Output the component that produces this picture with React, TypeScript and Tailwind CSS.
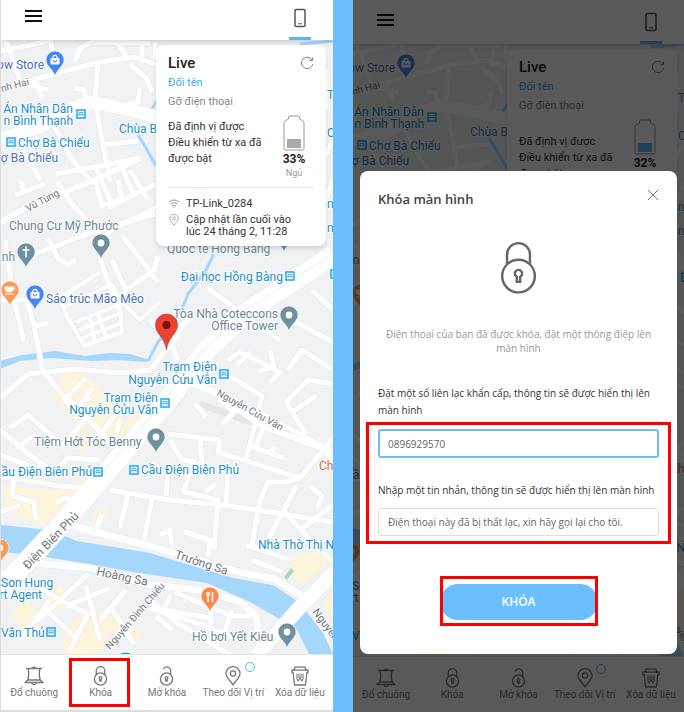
import type { ReactNode } from "react";

type RoadProps = { d: string; w: number };

const ROADS: RoadProps[] = [
  // north-west quarter
  { w: 5, d: "M0 51 L40 43 L52 40 M75 61 L80 48 L92 42 L150 43 M142 42 V63 M155 42 V60 M118 43 L128 60" },
  { w: 5, d: "M5 38 L20 80 M50 38 L56 70 M30 81 L62 72 L100 62 L135 57 L160 66 M20 82 L48 90 M36 80 L42 98 M75 88 L84 90 L86 100" },
  { w: 5, d: "M98 62 L95 100 L103 145 L110 182 M130 64 L146 78 L152 92 M140 88 L138 102 L128 104" },
  { w: 5, d: "M52 122 L72 160 L92 182 M102 145 L138 141 M56 174 L100 166 L140 158 M24 150 L40 180 M96 168 L112 204 M120 163 L134 196" },
  { w: 13, d: "M0 139 L40 127 L70 109 L92 102 L125 109 L170 120 L230 132" },
  // west
  { w: 6, d: "M0 223 L30 205 L75 188 L100 178 L140 158" },
  { w: 5, d: "M57 182 L72 204 L88 222 L86 234 M15 195 L45 184 M20 181 L25 192 M95 180 L102 206 L122 198 M118 180 L122 198 M108 208 L155 184 M130 170 L148 200" },
  { w: 5, d: "M30 256 L90 233 L155 214 M100 240 L118 226 L160 206 M48 238 L58 258 L68 265 L76 260 M122 236 L140 258 L158 282 M112 260 L120 278 L126 290 L154 270 L158 256 M100 258 L114 300" },
  { w: 4, d: "M60 298 L100 272 M66 306 L112 284 M60 298 L66 314 L84 346 L122 332 L120 302 L112 284 M76 322 L120 304 M79 330 L121 313 M82 338 L122 323 M90 318 L95 342 M98 314 L106 338 M124 304 L140 320 L160 302 M126 290 L118 310" },
  { w: 5, d: "M5 240 L14 300 L24 342 M0 300 H28 M26 298 L34 325 L42 368 L56 388 L78 408 L104 436 L118 448 M36 326 L48 323" },
  { w: 5, d: "M0 398 L28 374 L75 369 L120 373 L150 370 L166 350 L180 334" },
  // south-west
  { w: 5, d: "M10 428 L28 415 L62 445 M16 448 L36 434 M0 430 L30 455 L54 472 M54 472 L68 458 L100 460 M62 448 L84 420 L62 398 M66 398 L86 378 M78 408 L92 388 M84 396 L90 400 M100 436 L118 410 M112 448 L120 420" },
  { w: 5, d: "M0 476 L60 486 L84 488 L96 476 M14 478 L12 496 L34 502 L36 520 M56 504 L64 498 L76 500 L88 482 M0 512 L20 505 M0 455 L30 466 L60 470" },
  { w: 5, d: "M110 490 L170 500 L230 506 L270 512 L333 522 M128 494 L120 528 M152 498 L144 540 M102 514 L96 530" },
  // north-east
  { w: 5, d: "M326 70 V110 M333 140 L318 170 M333 180 L320 215 M208 288 L250 320 L280 340 M312 290 L333 310 M296 322 L333 342 M228 360 L240 352 L280 372 L270 382" },
  { w: 6, d: "M150 320 L170 340 L190 318 M170 340 L178 360" },
  // east
  { w: 5, d: "M230 376 L262 396 L258 412 L330 450 M262 396 L250 445 L246 458 M236 366 L250 352 M270 350 L274 366 L258 372 M288 370 L302 350 L333 370 M286 402 L308 380 L333 384 M286 402 L306 434 M292 412 L316 396 M195 404 L206 416 M218 398 L234 412 L222 424" },
  { w: 5, d: "M168 434 L220 440 L218 452 L300 478 L333 438 M200 440 L202 462 L190 470 M170 440 L182 460 L196 462 M250 446 L284 458 M264 426 L256 446 M274 446 L272 452" },
  { w: 5, d: "M300 478 L286 482 L268 482 L260 500 L252 545 M168 470 L166 496 M190 470 L184 492 L218 500 L214 550 M228 470 L226 508 M205 492 L216 484 M310 486 L322 496 L318 508 M322 450 L333 460 M296 486 L284 510 L262 550 M272 540 L296 540 M283 510 L310 540 L333 562 M300 530 L333 505" },
  { w: 5, d: "M160 535 L170 530 L172 545 M184 532 L210 540 L208 556 M252 560 L282 572 M246 545 L290 560" },
  // canal banks
  { w: 7, d: "M66 524 L110 536 L150 546 L235 571 L275 579 L302 596" },
  { w: 7, d: "M0 575 L34 563 L90 568 L150 585 L200 590 L240 602 L256 616 L260 644" },
  { w: 5, d: "M22 578 L60 600 L88 614 L70 650 M0 596 L30 582 M36 622 L88 574 M86 586 L100 640 M66 606 L110 588 M46 610 L78 640 M110 606 L134 644 M126 590 L100 620 M20 640 L50 600" },
  { w: 5, d: "M170 596 L164 610 L210 618 M174 592 L232 616 L256 616 M150 608 L200 624 L240 640 M156 616 L172 630 M210 600 L212 640 M232 610 L222 640 M150 600 L176 622 L230 655" },
];

const YELLOW = [
  "M50 396 L66 370 L84 374 L110 396 L124 424 L140 412 L142 440 L122 450 L96 432 L72 418 Z",
  "M2 486 L60 490 L92 474 L92 492 L70 516 L40 524 L8 512 Z",
  "M66 445 L82 420 L90 452 Z",
  "M96 512 L110 505 L104 522 L90 530 Z",
  "M44 592 L62 584 L66 606 L54 612 Z",
  "M64 628 L92 606 L140 632 L134 642 L112 630 L96 655 L64 655 Z",
  "M10 612 L28 600 L42 622 L30 640 Z",
  "M292 556 L322 552 L328 564 L302 584 L292 576 Z",
  "M324 600 L333 588 V618 L326 612 Z",
];

function Pin({ x, y, color, children }: { x: number; y: number; color: string; children?: ReactNode }) {
  return (
    <g transform={`translate(${x} ${y})`}>
      <path d="M0 12 C-2 5 -9 2 -9 -4 A9 9 0 0 1 9 -4 C9 2 2 5 0 12 Z" fill={color} stroke="#fff" strokeWidth="0.6" />
      {children ?? <circle cy="-4" r="3.4" fill="#fff" />}
    </g>
  );
}

function Bag() {
  return (
    <g fill="none" stroke="#fff">
      <rect x="-4.5" y="-6" width="9" height="6.5" rx="0.8" fill="#fff" stroke="none" />
      <path d="M-2.2 -6 A2.2 2.6 0 0 1 2.2 -6" strokeWidth="1.2" />
      <path d="M-1.6 -4 A1.6 2 0 0 0 1.6 -4" stroke="#4285f4" />
    </g>
  );
}

function Station({ x, y }: { x: number; y: number }) {
  return (
    <g transform={`translate(${x} ${y})`}>
      <rect x="-4" y="-4" width="8" height="8" fill="#fff" stroke="#1fa8e8" strokeWidth="1.5" />
      <path d="M-2 2 V-1.500 H2 V2 M-2 0.500 H2" stroke="#1fa8e8" strokeWidth="0.800" fill="none" />
    </g>
  );
}

function CityMap({ viewBox }: { viewBox: string }) {
  return (
    <svg
      viewBox={viewBox}
      preserveAspectRatio="xMinYMin slice"
      className="absolute inset-0 h-full w-full font-['Roboto','Noto_Sans',sans-serif]"
      role="img"
      aria-label="Bản đồ"
    >
      <rect y="0" width="700" height="1400" fill="#f1f2f4" />
      {YELLOW.map((d) => (
        <path key={d} d={d} fill="#fdf4dc" />
      ))}
      <path d="M284 577 L291 568 L294 571 L287 580 Z" fill="#a8dcb5" />
      <g fill="#a5d7fd">
        <path d="M0 361 L22 355 L55 351 L85 356 L110 353 L130 354 L150 360 L146 362 L118 360 L92 361 L50 358 L20 361 L0 369 Z" />
        <path d="M0 525 L50 530 L77 541 L150 553 L233 578 L273 585 L300 603 L323 633 L334 656 H310 L297 630 L283 621 L250 602 L207 583 L133 572 L83 563 L33 555 L0 552 Z" />
      </g>
      <g fill="none" stroke="#a5d7fd" strokeWidth="3" strokeLinejoin="round">
        <path d="M148 361 L158 342 L174 322 L184 304 L188 294 L206 270 L213 256 L212 244" />
        <path d="M160 95 L150 112 M138 135 L146 148 L156 166 M300 44 L333 41" />
      </g>
      <g fill="none" stroke="#e4e7ea" strokeLinejoin="round">
        {ROADS.map((r) => (
          <path key={r.d} d={r.d} strokeWidth={r.w + 1} />
        ))}
        <path d="M333 255 L297 279 L247 312 L205 352 L160 410 L100 480 L60 526 L0 590" strokeWidth="21" />
        <path d="M200 404 L262 426 L300 440 L333 452" strokeWidth="7" />
        <path d="M340 566 L300 607 L256 656" strokeWidth="15" />
      </g>
      <g fill="none" stroke="#fff" strokeLinejoin="round">
        {ROADS.map((r) => (
          <path key={r.d} d={r.d} strokeWidth={r.w} />
        ))}
        <path d="M333 255 L297 279 L247 312 L205 352 L160 410 L100 480 L60 526 L0 590" strokeWidth="20" />
        <path d="M178 378 L214 392 L262 426 L300 440 L333 452" strokeWidth="6" />
        <path d="M340 566 L300 607 L256 656" strokeWidth="14" />
      </g>
      <path d="M333 254 L297 277 L247 309 L203 350 L158 408 L98 478" fill="none" stroke="#eceef0" />

      <g fill="#6f7780" fontSize="11" stroke="#fff" strokeWidth="2" paintOrder="stroke" strokeLinejoin="round">
        <text x="2" y="92" fontSize="10" transform="rotate(-15 2 92)">nh Hai</text>
        <text x="28" y="212" fontSize="10" transform="rotate(-28 28 212)">Vũ Tùng</text>
        <text x="216" y="395" fontSize="10" transform="rotate(29 216 395)">Nguyễn Cửu Vân</text>
        <text x="28" y="570" fontSize="12" transform="rotate(-46 28 570)">Điện Biên Phủ</text>
        <text x="174" y="558" fontSize="12" transform="rotate(18 174 558)">Trường Sa</text>
        <text x="96" y="575" fontSize="12" transform="rotate(12 96 575)">Hoàng Sa</text>
        <text x="110" y="650" fontSize="10" transform="rotate(-49 110 650)">Nguyễn Đình Chiểu</text>
        <text x="312" y="612" fontSize="11" transform="rotate(53 312 612)">Nguyễn</text>
      </g>

      <g stroke="#fff" strokeWidth="2" paintOrder="stroke" strokeLinejoin="round" fontSize="12">
        <g fill="#1a8fc9">
          <text x="73" y="113" textAnchor="end">Án Nhân Dân</text>
          <text x="73" y="125" textAnchor="end">n Bình Thạnh</text>
          <text x="18" y="147">Chợ Bà Chiểu</text>
          <text x="119" y="133">Chùa Bà</text>
          <text x="283" y="281" textAnchor="end">Đại học Hồng Bàng</text>
          <text x="217" y="371" textAnchor="end">Trạm Điện</text>
          <text x="217" y="384" textAnchor="end">Nguyễn Cửu Vân</text>
          <text x="158" y="402" textAnchor="end">Trạm Điện</text>
          <text x="158" y="414" textAnchor="end">Nguyễn Cửu Vân</text>
          <text x="92" y="476" textAnchor="end">ầu Điện Biên Phủ</text>
          <text x="141" y="474">Cầu Điện Biên Phủ</text>
          <text x="258" y="549">Nhà Thờ Thị N</text>
          <text x="1" y="587">Son Hung</text>
          <text x="42" y="599" textAnchor="end">rt Agent</text>
          <text x="1" y="637">Văn Thủ</text>
          <text x="327" y="99">T</text>
          <text x="327" y="137">C</text>
          <text x="327" y="208">n</text>
          <text x="327" y="232">n</text>
        </g>
        <g fill="#4a72b8">
          <text x="44" y="69" textAnchor="end">ow Store</text>
          <text x="58" y="162" textAnchor="end">ợ Bà Chiểu</text>
          <text x="46" y="303">Sáo trúc Mão Mèo</text>
        </g>
        <g fill="#6a8794">
          <text x="9" y="230">Chung Cư Mỹ Phước</text>
          <text x="15" y="261" textAnchor="end">nh</text>
          <text x="167" y="253">Quốc tế Hồng Bàng</text>
          <text x="278" y="318" textAnchor="end">Tòa Nhà Coteccons</text>
          <text x="278" y="330" textAnchor="end">Office Tower</text>
          <text x="34" y="446">Tiệm Hớt Tóc Benny</text>
          <text x="192" y="641">Hồ bơi Yết Kiêu</text>
        </g>
        <text x="319" y="470" fill="#d9644a">Ch</text>
      </g>

      <Station x={81} y={114} />
      <Station x={11} y={142} />
      <Station x={290} y={276} />
      <Station x={224} y={374} />
      <Station x={165} y={403} />
      <Station x={98} y={472} />
      <Station x={134} y={470} />
      <Station x={51} y={632} />
      <Station x={335} y={274} />

      <Pin x={55} y={64} color="#4285f4"><Bag /></Pin>
      <Pin x={35} y={298} color="#4285f4"><Bag /></Pin>
      <Pin x={101} y={247} color="#6f90a0" />
      <Pin x={284} y={240} color="#6f90a0" />
      <Pin x={289} y={319} color="#6f90a0" />
      <Pin x={156} y={441} color="#6f90a0" />
      <Pin x={287} y={636} color="#6f90a0" />
      <Pin x={26} y={256} color="#6f90a0">
        <path d="M0 -9.500 V1.500 M-3.500 -6 H3.500" stroke="#fff" strokeWidth="1.6" />
      </Pin>
      <Pin x={10} y={294} color="#fb9a58">
        <path d="M-5 -7 H3 V-5 A4 3 0 0 1 -5 -5 Z M-5 0 H4" fill="#fff" stroke="#fff" />
        <circle cx="3.500" cy="-5.500" r="1.400" fill="none" stroke="#fff" />
      </Pin>
      <Pin x={0} y={552} color="#fb9a58" />
      <Pin x={210} y={600} color="#fb8a4a">
        <path d="M-3 -8 V-4 M-1 -8 V-4 M-2 -4.500 V2 M2.500 -8 V2" stroke="#fff" strokeWidth="1.500" />
      </Pin>
      <path d="M118 656 A8 5 0 0 1 133 656 Z" fill="#12a4bd" />

      <path d="M166.500 350 C165 337 155.500 334 155.500 325 A11 11 0 0 1 177.500 325 C177.500 334 168 337 166.500 350 Z" fill="#ea4335" stroke="#c5302a" strokeWidth="0.600" />
      <circle cx="166.500" cy="325" r="4" fill="#7c120b" />
    </svg>
  );
}

function LockIcon({ className, open = false, stroke = 1.4 }: { className: string; open?: boolean; stroke?: number }) {
  return (
    <svg viewBox="0 0 16 22" className={className} fill="none" stroke="currentColor" strokeWidth={stroke} aria-hidden="true">
      <circle cx="8" cy="14.300" r="6.700" />
      {open ? (
        <path d="M4.500 3.500 C5.500 0.500 10.500 0 12.300 3.500 C13 5 12.800 7 12.500 9.500" />
      ) : (
        <path d="M3.300 9.500 V5.500 A4.700 4.700 0 0 1 12.700 5.500 V9.500" />
      )}
      <path d="M7.300 16.700 V14.600 A1.500 1.500 0 1 1 8.700 14.600 V16.700 Z" strokeLinejoin="round" />
    </svg>
  );
}

function BellIcon() {
  return (
    <svg viewBox="0 0 20 20" className="h-5 w-5" fill="none" stroke="currentColor" strokeWidth="1.3" strokeLinejoin="round" strokeLinecap="round" aria-hidden="true">
      <path d="M8 2.500 C8.500 0.800 11.500 0.800 12 2.500 M2.500 2.500 H17.500 M4.200 2.500 C4.800 6 4.800 11 3.800 14 M15.800 2.500 C15.200 6 15.200 11 16.200 14 M3.800 14 L1 16.500 H19 L16.200 14 Z M7.500 16.500 C8 19.300 12 19.300 12.500 16.500" />
    </svg>
  );
}

function PlaceIcon({ className }: { className: string }) {
  return (
    <svg viewBox="0 0 16 20" className={className} fill="none" stroke="currentColor" strokeWidth="1.3" aria-hidden="true">
      <path d="M8 19 C6 15 1 12 1 7.500 A7 6.800 0 0 1 15 7.500 C15 12 10 15 8 19 Z" />
      <circle cx="8" cy="7.500" r="2.600" />
    </svg>
  );
}

function TrashIcon() {
  return (
    <svg viewBox="0 0 20 20" className="h-5 w-5" fill="none" stroke="currentColor" strokeWidth="1.3" strokeLinejoin="round" aria-hidden="true">
      <path d="M5 1.200 H15 L15.800 4 H18 V6.500 H16.800 L15.500 19 H4.500 L3.200 6.500 H2 V4 H4.200 Z M4.500 4.200 H15.500" />
      <path d="M7 7.500 V13 L8.200 15 L10 12 L11.800 15 L13 13 V7.500 M9 7.500 V12 M11 7.500 V12" strokeWidth="1.100" />
    </svg>
  );
}

function Header({ tall = false }: { tall?: boolean }) {
  return (
    <header className={`relative z-10 flex justify-between bg-white pr-[22px] pl-6 shadow-md ${tall ? "h-11 pt-1" : "h-10"}`}>
      <button type="button" aria-label="Menu" className="h-8">
        <svg viewBox="0 0 17 12" className="h-3 w-[17px]" stroke="#111" strokeWidth="2" aria-hidden="true">
          <path d="M0 1 H17 M0 6 H17 M0 11 H17" />
        </svg>
      </button>
      <button type="button" aria-label="Thiết bị" className="flex flex-col items-center border-b-[3px] border-[#5fb4f3] px-[5px] pt-2">
        <svg viewBox="0 0 12 20" className="h-5 w-3" fill="none" stroke="#555" strokeWidth="1.5" aria-hidden="true">
          <rect x="1" y="1.500" width="10" height="17" rx="1.200" />
          <path d="M4 15.800 H8" strokeWidth="1" />
        </svg>
      </button>
    </header>
  );
}

type DeviceProps = { percent: number; fill: string; gap: string };

function DeviceCard({ percent, fill, gap }: DeviceProps) {
  return (
    <section className="absolute top-[5px] right-[7px] w-[170px] rounded-lg bg-white px-3 pt-2 pb-2 text-[11px] leading-4 text-[#333] shadow-md">
      <div className="flex items-center justify-between">
        <h2 className="text-[15px] leading-5 font-medium text-[#222]">Live</h2>
        <button type="button" aria-label="Tải lại">
          <svg viewBox="0 0 14 14" className="h-3.5 w-3.5" fill="none" stroke="#888" aria-hidden="true">
            <path d="M12 4 A5.700 5.700 0 1 0 12.700 8 M12.500 1.500 V4.500 H9.500" />
          </svg>
        </button>
      </div>
      <a href="#rename" className="block leading-5 text-[#45a8ee]">Đổi tên</a>
      <p className="leading-[18px] text-[#888]">Gỡ điện thoại</p>
      <div className="flex justify-between">
        <p className={`w-[94px] ${gap}`}>
          Đã định vị được
          <br />
          Điều khiển từ xa đã được bật
        </p>
        <div className="flex w-10 flex-col items-center pt-1">
          <svg viewBox="0 0 22 36" className="h-9 w-[22px]" aria-hidden="true">
            <path d="M5.500 4 V2 Q5.500 1 6.500 1 H15.500 Q16.500 1 16.500 2 V4 L20 6 Q21 6.500 21 7.500 V33.500 Q21 35 19.500 35 H2.500 Q1 35 1 33.500 V7.500 Q1 6.500 2 6 Z" fill="none" stroke="#999" />
            <rect x="4" y="24" width="14" height="9" fill={fill} />
          </svg>
          <strong className="text-[12px] leading-4 font-bold text-[#222]">{percent}%</strong>
          <span className="text-[9px] leading-3 text-[#999]">Ngủ</span>
        </div>
      </div>
      <div className="mt-2 flex flex-col gap-1 border-t border-[#e8e8e8] pt-2.5 leading-3">
        <p className="flex gap-1.5">
          <svg viewBox="0 0 12 12" className="h-3 w-3" fill="none" stroke="#999" aria-hidden="true">
            <path d="M1 4 Q6 0 11 4 M2.500 6 Q6 3 9.500 6 M4 8 Q6 6.300 8 8 M5.500 9.500 H6.500" />
          </svg>
          TP-Link_0284
        </p>
        <p className="flex gap-1.5 text-[#333]">
          <span className="text-[#999]"><PlaceIcon className="h-3 w-3" /></span>
          <span>
            Cập nhật lần cuối vào
            <br />
            lúc 24 tháng 2, 11:28
          </span>
        </p>
      </div>
    </section>
  );
}

function NavItem({ label, icon, badge, marked }: { label: string; icon: ReactNode; badge?: boolean; marked?: boolean }) {
  return (
    <button type="button" className="relative flex flex-col items-center gap-px pt-[11px] text-[10px] leading-3 whitespace-nowrap text-[#777]">
      <span className="flex h-5 items-center">{icon}</span>
      {label}
      {badge && <span className="absolute top-[7px] right-3 h-2.5 w-2.5 rounded-full border border-[#5fb4f3]" />}
      {marked && <span className="absolute top-[3px] right-1 bottom-[3px] left-0.5 border-[3px] border-[#f00]" />}
    </button>
  );
}

function BottomNav({ marked = false }: { marked?: boolean }) {
  return (
    <nav className="relative grid h-14 grid-cols-5 border-t border-[#e5e5e5] bg-white">
      <NavItem label="Đổ chuông" icon={<BellIcon />} />
      <NavItem label="Khóa" icon={<LockIcon className="h-5 w-[15px]" />} marked={marked} />
      <NavItem label="Mở khóa" icon={<LockIcon className="h-5 w-[15px]" open />} />
      <NavItem label="Theo dõi Vị trí" icon={<PlaceIcon className="h-5 w-4" />} badge />
      <NavItem label="Xóa dữ liệu" icon={<TrashIcon />} />
    </nav>
  );
}

function LockDialog() {
  return (
    <div className="absolute inset-0 z-20 flex items-start bg-black/65 px-[7px] pt-[171px]">
      <form
        role="dialog"
        aria-labelledby="dialog-title"
        className="w-full rounded-lg bg-white px-[18px] pb-[34px] font-['Open_Sans','Noto_Sans',sans-serif] text-[10px] text-[#333]"
        onSubmit={(e) => e.preventDefault()}
      >
        <div className="flex items-start justify-between pt-4">
          <h2 id="dialog-title" className="text-[13px] leading-6 font-semibold text-[#444]">Khóa màn hình</h2>
          <button type="button" aria-label="Đóng" className="py-0.5">
            <svg viewBox="0 0 12 12" className="h-3 w-3" stroke="#777" aria-hidden="true">
              <path d="M1 1 L11 11 M11 1 L1 11" />
            </svg>
          </button>
        </div>
        <div className="flex justify-center pt-[30px] text-[#666]">
          <LockIcon className="h-[54px] w-[39px]" stroke={1} />
        </div>
        <p className="pt-8 text-center leading-[14px] text-[#999]">Điện thoại của bạn đã được khóa, đặt một thông điệp lên màn hình</p>
        <label htmlFor="contact" className="block pt-[30px] leading-[17px]">
          Đặt một số liên lạc khẩn cấp, thông tin sẽ được hiển thị lên màn hình
        </label>
        <div className="relative pt-2.5">
          <input
            id="contact"
            defaultValue="0896929570"
            className="block h-[29px] w-full rounded-[3px] border-2 border-[#6cbcff] px-2 text-[#666] outline-none"
          />
          <label htmlFor="message" className="block pt-6 pb-2.5 leading-4">
            Nhập một tin nhắn, thông tin sẽ được hiển thị lên màn hình
          </label>
          <input
            id="message"
            defaultValue="Điện thoại này đã bị thất lạc, xin hãy gọi lại cho tôi."
            className="block h-7 w-full rounded-[3px] border border-[#ddd] px-[9px] text-[#666] outline-none"
          />
          <span className="pointer-events-none absolute top-[3px] -right-3 -bottom-2 -left-3 border-[3px] border-[#f00]" />
        </div>
        <div className="relative mx-auto mt-12 w-[158px]">
          <button type="submit" className="block h-9 w-full rounded-full bg-[#6cbfff] text-[12px] font-semibold text-white">
            KHÓA
          </button>
          <span className="pointer-events-none absolute inset-x-0 -top-2 -bottom-1.5 border-[3px] border-[#f00]" />
        </div>
      </form>
    </div>
  );
}

export default function App() {
  return (
    <main className="grid min-h-screen grid-cols-[333fr_20px_331fr] font-['Roboto','Noto_Sans',sans-serif]">
      <section className="flex flex-col overflow-hidden border-b-2 border-l border-[#ddd] bg-white">
        <Header />
        <div className="relative flex-1 overflow-hidden">
          <CityMap viewBox="1 40 332 614" />
          <DeviceCard percent={33} fill="#aaa" gap="pt-2" />
        </div>
        <BottomNav marked />
      </section>
      <div className="bg-[#6cbfff]" />
      <section className="relative flex flex-col overflow-hidden bg-white">
        <Header tall />
        <div className="relative flex-1 overflow-hidden">
          <CityMap viewBox="2 41 331 612" />
          <DeviceCard percent={32} fill="#5fb4f3" gap="pt-[19px]" />
        </div>
        <BottomNav />
        <LockDialog />
      </section>
    </main>
  );
}
